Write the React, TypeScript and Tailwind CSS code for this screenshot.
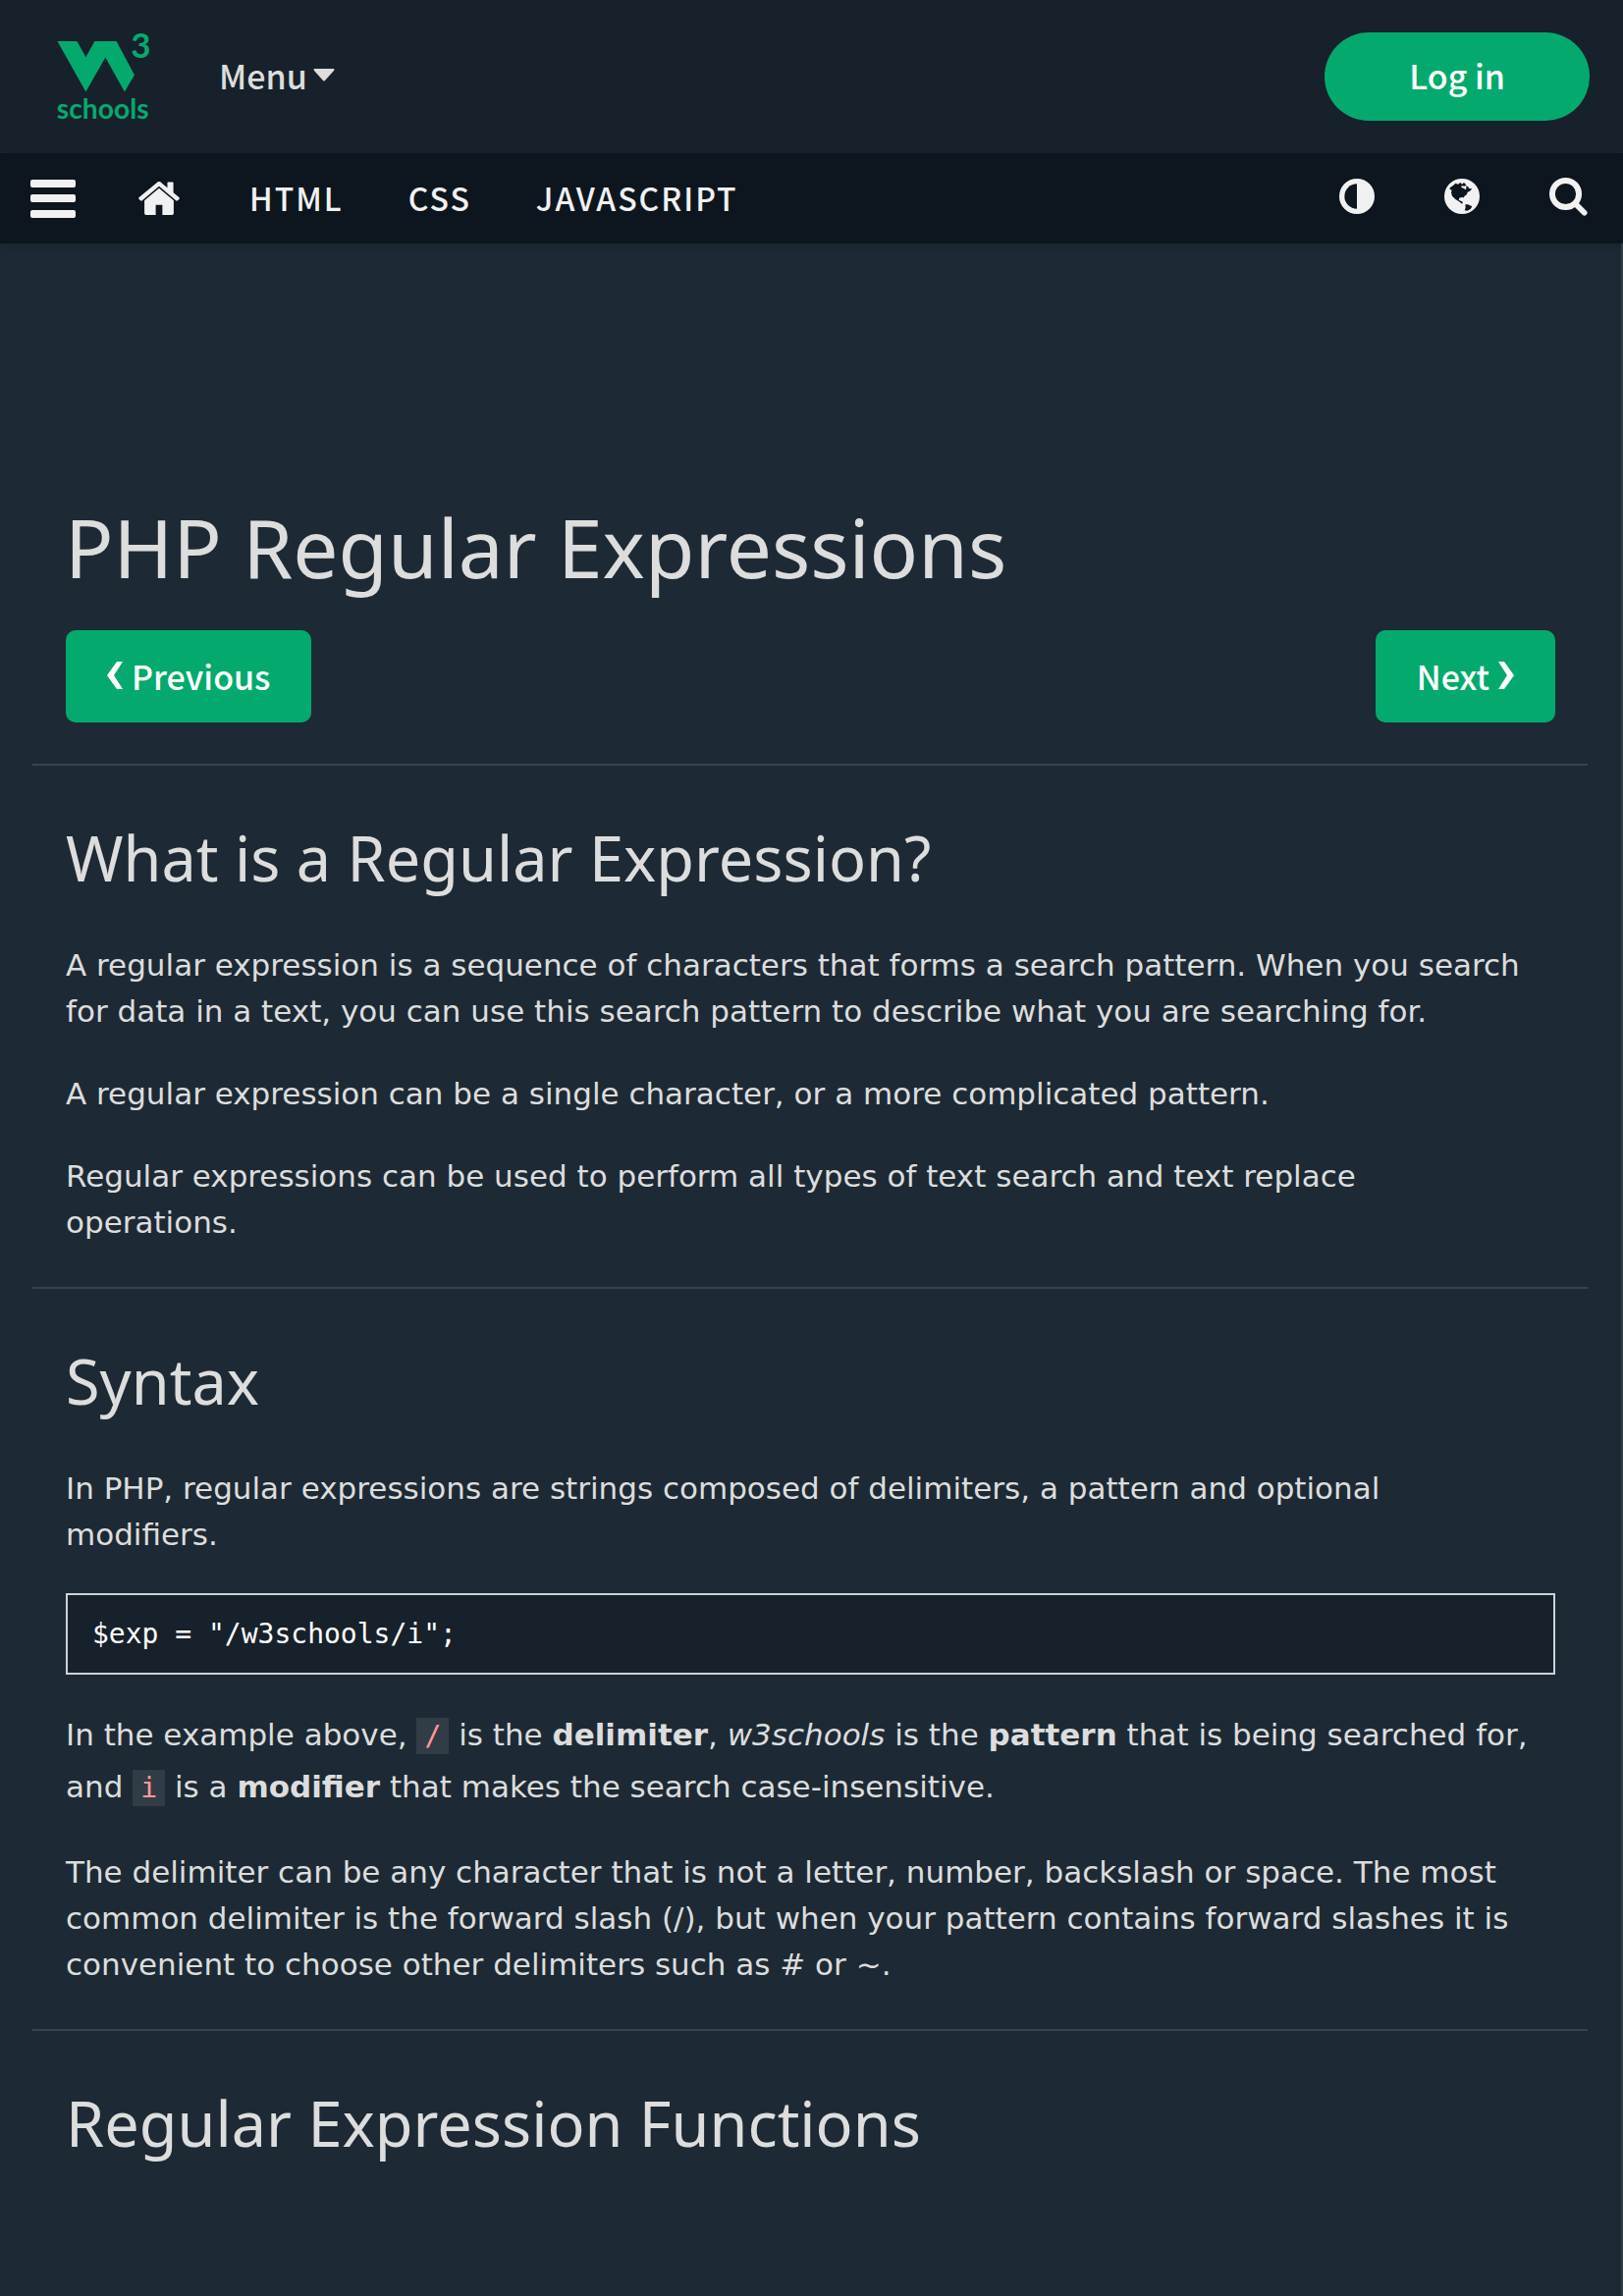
import React from "react";

const sans = "font-['Noto_Sans_CJK_SC',sans-serif]";

function Logo() {
  return (
    <svg viewBox="0 0 280 265" className="h-[88px] w-[94px] overflow-visible" role="img" aria-label="W3Schools">
      <path fill="#04aa6d" d="M0 24H60L87 73L114 24H181L236 127L206 179L147 74L87 179Z" />
      <g fill="#04aa6d" fontFamily="Lato, sans-serif" fontWeight="700">
        <text x="225" y="76" fontSize="105">
          3
        </text>
        <text x="-2" y="263" fontSize="85">
          schools
        </text>
      </g>
    </svg>
  );
}

function MenuIcon() {
  return (
    <svg viewBox="0 0 46 39" className="h-[39px] w-[46px]" fill="#f1f1f1" aria-hidden="true">
      <rect width="46" height="8" rx="2" />
      <rect y="15" width="46" height="8" rx="2" />
      <rect y="31" width="46" height="8" rx="2" />
    </svg>
  );
}

function HomeIcon() {
  return (
    <svg viewBox="0 0 124 100" className="h-[34px] w-[42px]" fill="#f1f1f1" aria-hidden="true">
      <path d="M62 0Q66 0 70 4L87 18V3Q87 1 89 1H103Q105 1 105 3V33L122 47Q125 50 122 53L118 57Q115 59 112 56L62 14L12 56Q9 59 6 57L2 53Q-1 50 2 47L54 4Q58 0 62 0Z" />
      <path d="M62 20L106 57V95Q106 100 101 100H72V70H52V100H23Q18 100 18 95V57Z" />
    </svg>
  );
}

function ContrastIcon() {
  return (
    <svg viewBox="0 0 108 108" className="size-9" aria-hidden="true">
      <circle cx="54" cy="54" r="54" fill="#f1f1f1" />
      <path d="M54 16V92A38 38 0 0 1 54 16Z" fill="#0d161f" />
    </svg>
  );
}

function GlobeIcon() {
  return (
    <svg viewBox="0 0 108 108" className="size-9" aria-hidden="true">
      <circle cx="54" cy="54" r="54" fill="#f1f1f1" />
      <g fill="#0d161f">
        <path d="M17 28L28 20L34 14L42 17L49 12L54 17L60 12L67 19L62 23L54 22L51 26L60 30L65 34L68 27L65 22L72 24L76 30L85 31L78 38L71 41L69 48L61 54L60 58L53 57L46 59L44 65L51 68L57 72L54 77L45 70L34 63L24 53L21 43L23 35L17 33Z" />
        <path d="M64 79L72 79L85 85L80 93L70 98L62 97L65 89Z" />
      </g>
    </svg>
  );
}

function SearchIcon() {
  return (
    <svg viewBox="0 0 118 118" className="size-[39px]" fill="none" stroke="#f1f1f1" aria-hidden="true">
      <circle cx="50" cy="50" r="41" strokeWidth="18" />
      <path d="M80 80L108 108" strokeWidth="17" strokeLinecap="round" />
    </svg>
  );
}

function Chevron({ next = false }: { next?: boolean }) {
  return (
    <svg viewBox="0 0 17 28" className="h-7 w-[17px]" fill="currentColor" aria-hidden="true">
      {next ? <path d="M1 0H7L17 14L7 28H1L10 14Z" /> : <path d="M16 0H10L0 14L10 28H16L7 14Z" />}
    </svg>
  );
}

function Rule() {
  return <hr className="mt-[42px] mb-[45px] h-0.5 border-0 bg-[#38444d]" />;
}

function Heading({ children }: { children: React.ReactNode }) {
  return (
    <h2 className="mx-[34px] font-['Noto_Sans',sans-serif] text-[63px] leading-[98px] font-normal">{children}</h2>
  );
}

function Para({ children, tall = false }: { children: React.ReactNode; tall?: boolean }) {
  return (
    <p className={tall ? "mt-[35px] mr-[58px] ml-[34px] leading-[53px]" : "mt-[37px] mr-[58px] ml-[34px] leading-[47px]"}>
      {children}
    </p>
  );
}

function Code({ children }: { children: React.ReactNode }) {
  return (
    <code className="bg-[#323c46] px-2 py-0.5 font-['DejaVu_Sans_Mono',monospace] text-[28px] leading-none text-[#ff9999]">
      {children}
    </code>
  );
}

export default function App() {
  return (
    <div className="flex min-h-screen flex-col overflow-hidden bg-[#1d2a35] font-['DejaVu_Sans',sans-serif] text-[31px] text-[#dddddd]">
      <header className={`flex h-[156px] items-center bg-[#17212b] pr-[34px] pl-[58px] ${sans}`}>
        <a href="#home" aria-label="W3Schools home">
          <Logo />
        </a>
        <button type="button" className="ml-[71px] flex items-center gap-1.5 pb-1 text-[34px] font-medium">
          Menu
          <svg viewBox="0 0 22 13" className="h-[13px] w-[22px]" fill="#dddddd" aria-hidden="true">
            <path d="M1 0H21Q22 1 21 2L12 12Q11 13 10 12L1 2Q0 1 1 0Z" />
          </svg>
        </button>
        <button
          type="button"
          className="ml-auto h-[90px] rounded-full bg-[#04aa6d] px-[86px] pb-1 text-[34px] font-medium text-white"
        >
          Log in
        </button>
      </header>

      <nav
        className={`flex h-[92px] items-center bg-[#0d161f] pr-9 pl-[31px] text-[32px] font-medium tracking-[2px] text-[#f1f1f1] shadow-md ${sans}`}
      >
        <button type="button" aria-label="Open menu">
          <MenuIcon />
        </button>
        <a href="#home" aria-label="Home" className="ml-16">
          <HomeIcon />
        </a>
        <div className="ml-[71px] flex gap-[66px] pb-0.5">
          <a href="#html">HTML</a>
          <a href="#css">CSS</a>
          <a href="#javascript">JAVASCRIPT</a>
        </div>
        <div className="ml-auto flex items-center gap-[71px] pb-1">
          <button type="button" aria-label="Toggle dark mode">
            <ContrastIcon />
          </button>
          <button type="button" aria-label="Translate">
            <GlobeIcon />
          </button>
          <button type="button" aria-label="Search">
            <SearchIcon />
          </button>
        </div>
      </nav>

      <main className="grow border-r-2 border-[#2f3b45] pt-[244px] pr-[34px] pl-[33px]">
        <h1 className="mx-[33px] font-['Noto_Sans',sans-serif] text-[82px] leading-[130px] font-normal">
          PHP Regular Expressions
        </h1>
        <div className={`mx-[33px] mt-5 ml-[34px] flex justify-between text-[34px] font-medium text-white ${sans}`}>
          <a href="#previous" className="flex h-[94px] items-center gap-2 rounded-[10px] bg-[#04aa6d] px-[42px] pb-0.5">
            <Chevron /> Previous
          </a>
          <a href="#next" className="flex h-[94px] items-center gap-2 rounded-[10px] bg-[#04aa6d] px-[42px] pb-0.5">
            Next <Chevron next />
          </a>
        </div>
        <Rule />

        <Heading>What is a Regular Expression?</Heading>
        <Para>
          A regular expression is a sequence of characters that forms a search pattern. When you search for data in a
          text, you can use this search pattern to describe what you are searching for.
        </Para>
        <Para>A regular expression can be a single character, or a more complicated pattern.</Para>
        <Para>Regular expressions can be used to perform all types of text search and text replace operations.</Para>
        <Rule />

        <Heading>Syntax</Heading>
        <Para>In PHP, regular expressions are strings composed of delimiters, a pattern and optional modifiers.</Para>
        <pre className="mx-[33px] mt-9 ml-[34px] border-2 border-[#ccd2d8] bg-[#17212b] px-[25px] py-[18px] font-['DejaVu_Sans_Mono',monospace] text-[28px] leading-[43px] text-white">
          <code className="font-['DejaVu_Sans_Mono',monospace]">$exp = "/w3schools/i";</code>
        </pre>
        <Para tall>
          In the example above, <Code>/</Code> is the <strong>delimiter</strong>, <em>w3schools</em> is the{" "}
          <strong>pattern</strong> that is being searched for, and <Code>i</Code> is a <strong>modifier</strong> that
          makes the search case-insensitive.
        </Para>
        <Para>
          The delimiter can be any character that is not a letter, number, backslash or space. The most common delimiter
          is the forward slash (/), but when your pattern contains forward slashes it is convenient to choose other
          delimiters such as # or ~.
        </Para>
        <Rule />

        <Heading>Regular Expression Functions</Heading>
      </main>
    </div>
  );
}
